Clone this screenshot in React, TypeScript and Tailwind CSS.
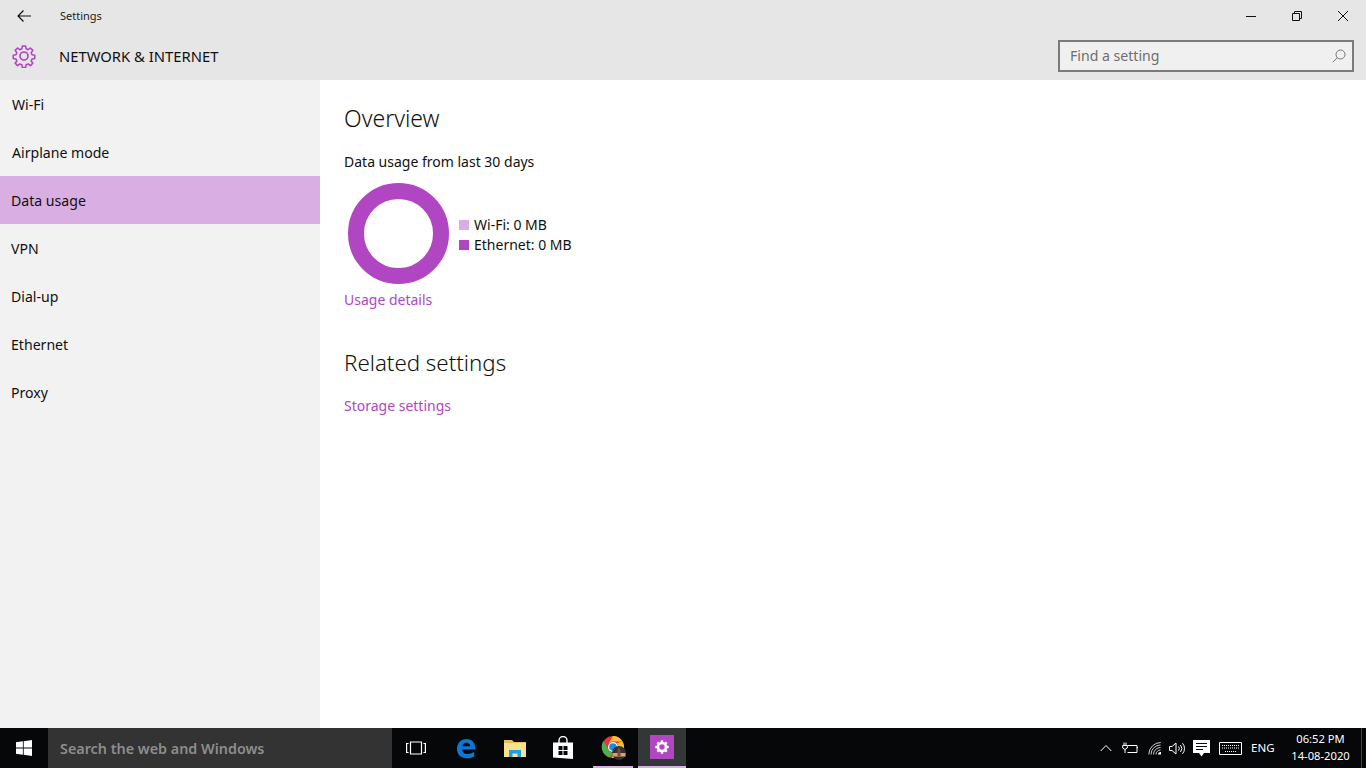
import React from "react";

function Gear({ className = "" }: { className?: string }) {
  return (
    <svg viewBox="0 0 24 24" className={className} fill="none" stroke="currentColor" strokeWidth="1.700" strokeLinejoin="round">
      <circle cx="12" cy="12" r="4" />
      <path d="M10.200 1.200h3.600l.5 3 2.200.9 2.500-1.800 2.600 2.600-1.800 2.500.9 2.200 3 .5v3.600l-3 .5-.9 2.200 1.800 2.500-2.600 2.600-2.500-1.800-2.200.9-.5 3h-3.600l-.5-3-2.200-.9-2.500 1.800-2.600-2.600 1.800-2.500-.9-2.200-3-.5v-3.600l3-.5.9-2.200-1.800-2.500 2.600-2.600 2.500 1.800 2.200-.9z" transform="translate(12 12) scale(.92) translate(-12 -12)" />
    </svg>
  );
}

function NavItem({ label, active, pl }: { label: string; active?: boolean; pl: string }) {
  return (
    <div className={`h-12 flex items-center pt-[2px] text-[14.100px] text-[#111] ${pl} ${active ? "bg-[#d9aee2]" : ""}`}>{label}</div>
  );
}

export default function App() {
  return (
    <div className="w-[1366px] h-[768px] overflow-hidden flex flex-col bg-white font-['Noto_Sans','Open_Sans',sans-serif] text-[#111]">
      {/* Header */}
      <header className="h-20 shrink-0 bg-[#e6e6e6] flex flex-col">
        <div className="h-8 flex items-center">
          <button className="w-12 h-8 flex items-center justify-center">
            <svg width="16" height="14" viewBox="0 0 16 14" fill="none" stroke="#111" strokeWidth="1.200">
              <path d="M15 7H2M7.500 1.500 2 7l5.500 5.500" />
            </svg>
          </button>
          <span className="ml-[12px] text-[11px] text-[#222]">Settings</span>
          <div className="ml-auto flex h-8">
            <div className="w-[46px] flex items-center justify-center">
              <svg width="12" height="12" viewBox="0 0 12 12" stroke="#111"><path d="M1 6.500h10" /></svg>
            </div>
            <div className="w-[46px] flex items-center justify-center">
              <svg width="12" height="12" viewBox="0 0 12 12" fill="none" stroke="#111"><path d="M1.500 3.500h7v7h-7zM3.500 3.500V1.500h7v7H8.500" /></svg>
            </div>
            <div className="w-[46px] flex items-center justify-center">
              <svg width="12" height="12" viewBox="0 0 12 12" stroke="#111"><path d="M1 1l10 10M11 1 1 11" /></svg>
            </div>
          </div>
        </div>
        <div className="h-12 flex items-center">
          <Gear className="w-6 h-6 ml-3 text-[#b146c2]" />
          <span className="ml-[23px] text-[14.800px] text-[#111]">NETWORK &amp; INTERNET</span>
          <div className="ml-auto mr-3 w-[296px] h-[32px] border-2 border-[#7a7a7a] bg-[#f0f0f0] flex items-center pl-[10px] pr-[6px] justify-between">
            <span className="text-[14.100px] text-[#6e6e6e] mt-[-1px]">Find a setting</span>
            <svg width="14" height="14" viewBox="0 0 14 14" fill="none" stroke="#777" strokeWidth="1">
              <circle cx="8.500" cy="5.500" r="4.500" />
              <path d="M5.300 8.700.8 13.200" />
            </svg>
          </div>
        </div>
      </header>

      {/* Body */}
      <div className="flex-1 flex min-h-0">
        <nav className="w-80 shrink-0 bg-[#f2f2f2]">
          <NavItem label="Wi-Fi" pl="pl-3" />
          <NavItem label="Airplane mode" pl="pl-3" />
          <NavItem label="Data usage" pl="pl-[11px]" active />
          <NavItem label="VPN" pl="pl-[11px]" />
          <NavItem label="Dial-up" pl="pl-[11px]" />
          <NavItem label="Ethernet" pl="pl-[11px]" />
          <NavItem label="Proxy" pl="pl-[11px]" />
        </nav>
        <main className="flex-1 pl-6 pt-[22px]">
          <h1 className="text-[23px] leading-[32px] font-light text-[#111]">Overview</h1>
          <p className="mt-[18px] text-[14px] leading-5 text-[#111]">Data usage from last 30 days</p>
          <div className="flex items-center mt-[11px] ml-1">
            <div className="w-[101px] h-[101px] rounded-full border-[16px] border-[#b146c2]" />
            <div className="ml-[10px] mt-[2px] text-[14px] leading-5">
              <div className="flex items-center"><span className="w-[10px] h-[10px] bg-[#d9aee2] mr-[5px]" />Wi-Fi: 0 MB</div>
              <div className="flex items-center"><span className="w-[10px] h-[10px] bg-[#b146c2] mr-[5px]" />Ethernet: 0 MB</div>
            </div>
          </div>
          <a className="block mt-[6px] text-[14px] leading-5 text-[#b146c2]">Usage details</a>
          <h2 className="mt-[37px] text-[22.300px] leading-[32px] font-light text-[#111]">Related settings</h2>
          <a className="block mt-[17px] text-[14px] leading-5 text-[#b146c2]">Storage settings</a>
        </main>
      </div>

      {/* Taskbar */}
      <footer className="h-10 shrink-0 bg-[#050708] flex items-stretch text-white">
        <div className="w-12 flex items-center justify-center">
          <svg width="16" height="16" viewBox="0 0 16 16" fill="#fff">
            <path d="M0 2.300 6.900 1.300V7.600H0zM7.700 1.200 16 0V7.600H7.700zM0 8.400H6.900V14.700L0 13.700zM7.700 8.400H16V16L7.700 14.800z" />
          </svg>
        </div>
        <div className="w-[344px] bg-[#333333] flex items-center pl-3 pt-[1px] text-[14.350px] font-semibold text-[#8d8d8d]">Search the web and Windows</div>

        <div className="w-12 flex items-center justify-center">
          <svg width="20" height="14" viewBox="0 0 20 14" fill="none" stroke="#fff" strokeWidth="1.200">
            <path d="M4.500 1h11v12h-11zM2.600 2.500H.6v9h2M17.400 2.500h2v9h-2" />
          </svg>
        </div>
        <div className="w-[52px] flex items-center justify-center">
          <svg width="20" height="21" viewBox="0 0 20 21">
            <path fill="#0a78d7" d="M1 11C1 5 5 1 10.500 1 16 1 19.500 5 19.500 11.500H6.200c.2 3 2 4.500 5 4.500 2.500 0 4.800-.7 7-2v4.400c-2 1.200-4.500 1.900-7.600 1.900C4.800 20.300 1 16.500 1 11zm5.300-2.800h8c-.2-2-1.700-3.500-3.800-3.500-2.200 0-3.800 1.400-4.200 3.500z" />
          </svg>
        </div>
        <div className="w-[46px] flex items-center justify-center">
          <svg width="22" height="18" viewBox="0 0 22 18">
            <path fill="#e8c15a" d="M0 1h8l2 2h12v3H0z" />
            <path fill="#fbe38e" d="M0 4h22v14H0z" />
            <path fill="#1d9fe8" d="M5 18v-7h12v7h-3.500v-3.500h-5V18z" />
          </svg>
        </div>
        <div className="w-[50px] flex items-center justify-center">
          <svg width="22" height="24" viewBox="0 0 22 24">
            <path fill="none" stroke="#fff" strokeWidth="1.400" d="M7 7V4.500a4 4 0 0 1 8 0V7" />
            <path fill="#fff" d="M1 6.500h20V23L1 21.500z" />
            <path fill="#050708" d="M6.500 10h4v4h-4zM11.500 10h4v4h-4zM6.500 15h4v4h-4zM11.500 15h4v4h-4z" />
          </svg>
        </div>
        <div className="w-10 ml-[5px] relative flex items-center justify-center border-b-2 border-[#d9aee2]">
          <svg width="26" height="26" viewBox="0 0 26 26" className="mt-[2px] ml-[2px]">
            <circle cx="12" cy="12" r="11" fill="#e53935" />
            <path fill="#fbc02d" d="M12 1a11 11 0 0 1 9.500 5.500H12a5.500 5.500 0 0 0-5 3z" />
            <path fill="#4caf50" d="M2.500 6 8 15.500a5.500 5.500 0 0 0 5 2.500L8.200 22.400A11 11 0 0 1 2.500 6z" />
            <path fill="#fbc02d" d="M21.500 6.500a11 11 0 0 1-11 16.400l5.500-8a5.500 5.500 0 0 0 0-7z" />
            <circle cx="12" cy="12" r="5" fill="#fff" />
            <circle cx="12" cy="12" r="3.800" fill="#1e88e5" />
            <circle cx="18" cy="18" r="7" fill="#30303a" />
            <path fill="#e0a060" d="M11.500 18h13v3.500h-13z" />
            <path fill="#7a4a30" d="M16.500 21v-6l1.500-3 1.500 3v6z" />
          </svg>
        </div>
        <div className="w-12 ml-[5px] bg-[#333836] flex items-center justify-center border-b-2 border-[#d9aee2]">
          <div className="w-6 h-6 bg-[#b146c2] flex items-center justify-center">
            <svg width="14" height="14" viewBox="0 0 14 14">
              <circle cx="7" cy="7" r="4" fill="none" stroke="#fff" strokeWidth="2.600" />
              <path stroke="#fff" strokeWidth="2.400" d="M7 .3v2.500M7 11.200v2.500M.3 7h2.500M11.200 7h2.500M2.300 2.300l1.700 1.700M10 10l1.700 1.700M2.300 11.700 4 10M10 4l1.700-1.700" />
            </svg>
          </div>
        </div>

        <div className="ml-auto flex items-center">
          <svg width="12" height="8" viewBox="0 0 12 8" fill="none" stroke="#fff" className="mr-[10px]"><path d="M.7 7 6 1.500 11.300 7" /></svg>
          <svg width="16" height="12" viewBox="0 0 16 12" fill="none" stroke="#fff" className="mr-[10px]">
            <path d="M5.500 3.500h9.500v7H5.500M14.900 5.500h1M2 .5v3M4 .5v3M.7 3.500h4.600v2.500L3 7.500.7 6zM3 7.500v3.500" />
          </svg>
          <svg width="14" height="13" viewBox="0 0 14 13" fill="none" stroke="#ccc" className="mr-[7px]">
            <path d="M.8 12.500a12 12 0 0 1 12-12M3 12.500a9.500 9.500 0 0 1 9.500-9.500M5.500 12.500a7 7 0 0 1 7-7M8 12.500a4.500 4.500 0 0 1 4.500-4.500" />
            <path fill="#fff" stroke="none" d="M10 12.500a2.500 2.500 0 0 1 3-2.500v2.500z" />
          </svg>
          <svg width="17" height="13" viewBox="0 0 17 13" fill="none" stroke="#fff" className="mr-[7px]">
            <path d="M.5 4.500h2.500L7 1v11L3 8.500H.5zM9.500 4.500a3 3 0 0 1 0 4M11.500 3a5.500 5.500 0 0 1 0 7M13.500 1.200a8 8 0 0 1 0 10.600" />
          </svg>
          <svg width="17" height="17" viewBox="0 0 17 17" className="mr-[9px]">
            <path fill="#fff" d="M0 0h17v13h-6l-2.500 3.500L6 13H0z" />
            <path stroke="#050708" d="M3 3.500h11M3 6.500h11M3 9.500h7" />
          </svg>
          <svg width="23" height="13" viewBox="0 0 23 13" fill="none" stroke="#fff" className="mr-[9px]">
            <path d="M.5.500h22v12H.5z" />
            <path strokeDasharray="1 1" d="M3 3.500h17M3 6h17M6 9.500h11" />
          </svg>
          <span className="text-[11.500px] w-[32px]">ENG</span>
          <div className="w-[75px] text-center text-[11.200px] leading-[17px] text-white mt-[-2px]">
            <div>06:52 PM</div>
            <div>14-08-2020</div>
          </div>
          <div className="w-[8px] h-full flex justify-end"><div className="w-[5px] h-full border-l border-[#444]" /></div>
        </div>
      </footer>
    </div>
  );
}
